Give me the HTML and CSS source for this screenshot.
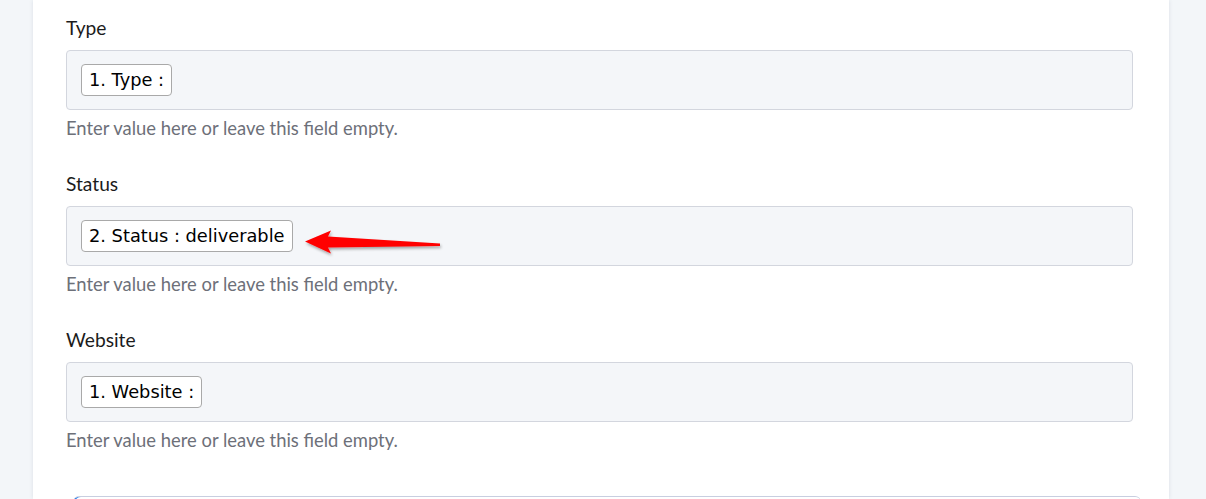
FILE: index.html
```html
<!DOCTYPE html>
<html>
<head>
<meta charset="utf-8">
<link rel="stylesheet" href="styles.css">
</head>
<body>
<div class="card">
  <div class="field">
    <div class="label">Type</div>
    <div class="box"><span class="pill">1. Type :</span></div>
    <div class="help">Enter value here or leave this field empty.</div>
  </div>
  <div class="field">
    <div class="label">Status</div>
    <div class="box"><span class="pill">2. Status : deliverable</span></div>
    <div class="help">Enter value here or leave this field empty.</div>
  </div>
  <div class="field">
    <div class="label">Website</div>
    <div class="box"><span class="pill">1. Website :</span></div>
    <div class="help">Enter value here or leave this field empty.</div>
  </div>
  <div class="next"></div>
</div>
<svg class="arrow" width="150" height="40" viewBox="300 222 150 40">
  <defs>
    <filter id="sh" x="-10%" y="-40%" width="120%" height="180%">
      <feGaussianBlur in="SourceAlpha" stdDeviation="1.5"/>
      <feOffset dx="1" dy="2" result="b"/>
      <feComponentTransfer><feFuncA type="linear" slope="0.35"/></feComponentTransfer>
      <feMerge><feMergeNode/><feMergeNode in="SourceGraphic"/></feMerge>
    </filter>
  </defs>
  <polygon filter="url(#sh)" fill="#ff0000" points="305,241.5 331,230.5 328,236.5 440,243.5 440,246 328,247.5 331,253.5"/>
</svg>
</body>
</html>
```
FILE: styles.css
```css
body {
	margin:0;
	background-color:#f3f6f9;
	font-family:Lato, "Open Sans", sans-serif;
	overflow:hidden;
}
.card {
	margin-left:33px;
	width:1067px;
	padding:16px 36px 0 33px;
	background-color:#fff;
	box-shadow:0 0 4px rgba(40,60,90,0.12);
	height:483px;
}
.field {
	margin-bottom:33px;
}
.label {
	font-size:19.2px;
	color:#1b1b1b;
	line-height:24px;
	margin-bottom:10px;
}
.box {
	background-color:#f4f6f9;
	border:1px solid #d3d6de;
	border-radius:4px;
	padding:13px 14px;
	height:32px;
}
.pill {
	display:inline-block;
	box-sizing:border-box;
	height:32px;
	line-height:30px;
	padding:0 7px;
	background-color:#fff;
	border:1px solid #a9a9a9;
	border-radius:4px;
	font-family:"DejaVu Sans", Verdana, sans-serif;
	font-size:17.8px;
	color:#000;
}
.help {
	margin-top:7px;
	font-size:18.4px;
	line-height:22px;
	color:#6d7079;
}
.next {
	margin:45px -8px 0 7px;
	height:20px;
	border-top:1px solid #c8cee0;
	border-radius:6px 6px 0 0;
	box-shadow:2px 0 0 #1a73e8 inset;
}
.arrow {
	position:absolute;
	left:300px;
	top:222px;
}
```
